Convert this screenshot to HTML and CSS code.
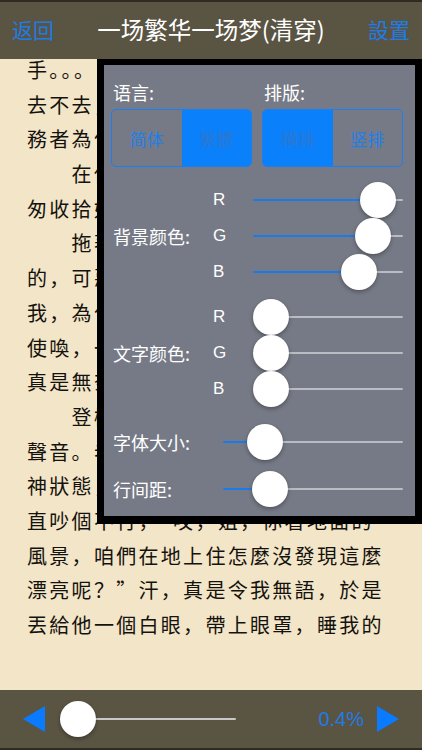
FILE: index.html
```html
<!DOCTYPE html>
<html lang="zh">
<head>
<meta charset="utf-8">
<title>一场繁华一场梦(清穿)</title>
<link rel="stylesheet" href="styles.css">
</head>
<body>
<div class="app">
  <header class="topbar">
    <span class="nav-btn">返回</span>
    <span class="title">一场繁华一场梦(清穿)</span>
    <span class="nav-btn">設置</span>
  </header>

  <main class="reader">
    <div class="text">
      <div class="line">手。。。“姐，你到底是去還是</div>
      <div class="line">去不去，給個話啊！”識時</div>
      <div class="line">務者為俊傑，我只好點頭。</div>
      <div class="line">　　在他的催促下，我匆</div>
      <div class="line">匆收拾好行李，跟著他出了</div>
      <div class="line">　　拖著沉重的行李箱，累</div>
      <div class="line">的，可惡的老弟居然不幫</div>
      <div class="line">我，為什麼我就要被他這麼</div>
      <div class="line">使喚，一點都不懂得尊重</div>
      <div class="line">真是無奈啊。</div>
      <div class="line">　　登機後，耳邊傳來他的</div>
      <div class="line">聲音。老弟一副興奮的精</div>
      <div class="line">神狀態，對著窗外的雲層</div>
      <div class="line">直吵個不行，“哎，姐，你看地面的</div>
      <div class="line">風景，咱們在地上住怎麼沒發現這麼</div>
      <div class="line">漂亮呢？”汗，真是令我無語，於是</div>
      <div class="line">丟給他一個白眼，帶上眼罩，睡我的</div>
    </div>

    <section class="panel">
      <div class="seg-labels">
        <span class="label">语言:</span>
        <span class="label">排版:</span>
      </div>
      <div class="seg-row">
        <div class="segmented">
          <span class="seg">简体</span>
          <span class="seg on">繁體</span>
        </div>
        <div class="segmented">
          <span class="seg on">横排</span>
          <span class="seg">竖排</span>
        </div>
      </div>

      <div class="rgb-group first">
        <span class="group-name">背景颜色:</span>
        <span class="ch">R</span>
        <div class="slider" style="--p:0.94"><div class="track"></div><div class="thumb"></div></div>
        <span class="ch">G</span>
        <div class="slider" style="--p:0.895"><div class="track"></div><div class="thumb"></div></div>
        <span class="ch">B</span>
        <div class="slider" style="--p:0.77"><div class="track"></div><div class="thumb"></div></div>
      </div>

      <div class="rgb-group second">
        <span class="group-name">文字颜色:</span>
        <span class="ch">R</span>
        <div class="slider" style="--p:0"><div class="track"></div><div class="thumb"></div></div>
        <span class="ch">G</span>
        <div class="slider" style="--p:0"><div class="track"></div><div class="thumb"></div></div>
        <span class="ch">B</span>
        <div class="slider" style="--p:0"><div class="track"></div><div class="thumb"></div></div>
      </div>

      <div class="single-row font-row">
        <span class="row-name">字体大小:</span>
        <div class="slider" style="--p:0.17"><div class="track"></div><div class="thumb"></div></div>
      </div>

      <div class="single-row spacing-row">
        <span class="row-name">行间距:</span>
        <div class="slider" style="--p:0.2"><div class="track"></div><div class="thumb"></div></div>
      </div>
    </section>
  </main>

  <footer class="bottombar">
    <svg class="tri" width="22" height="26" viewBox="0 0 22 26"><polygon points="22,0 22,26 0,13" fill="#0a7aff"/></svg>
    <div class="slider page-slider" style="--p:0"><div class="track"></div><div class="thumb"></div></div>
    <span class="percent">0.4%</span>
    <svg class="tri" width="22" height="26" viewBox="0 0 22 26"><polygon points="0,0 0,26 22,13" fill="#0a7aff"/></svg>
  </footer>
</div>
</body>
</html>
```

FILE: styles.css
```css
* { box-sizing: border-box; }

html, body {
  margin: 0;
  padding: 0;
  width: 422px;
  height: 750px;
  overflow: hidden;
  background: #f3e5c7;
  font-family: "Noto Sans CJK SC", "Noto Sans", sans-serif;
}

.app {
  width: 422px;
  height: 750px;
  display: flex;
  flex-direction: column;
}

/* top bar */
.topbar {
  height: 59px;
  flex: none;
  background: #5a5443;
  border-top: 2px solid #2f2b23;
  display: grid;
  grid-template-columns: auto 1fr auto;
  align-items: center;
  padding: 0 12px 4px;
}

.nav-btn {
  color: #1f7be6;
  font-size: 21px;
  line-height: 26px;
}

.title {
  color: #ffffff;
  font-size: 23.5px;
  line-height: 28px;
  text-align: center;
  white-space: nowrap;
}

/* reading area */
.reader {
  flex: 1;
  position: relative;
  overflow: hidden;
  background: #f3e5c7;
  padding-left: 27px;
}

.text {
  margin-top: -6px;
  font-family: "Noto Sans CJK SC", "Noto Sans CJK TC", sans-serif;
  font-size: 20px;
  letter-spacing: 2.3px;
  line-height: 34.7px;
  color: #14120e;
}

.line {
  white-space: pre;
  height: 34.7px;
}

/* settings panel */
.panel {
  position: absolute;
  top: 0;
  left: 97px;
  width: 325px;
  background: #767a86;
  border-style: solid;
  border-color: #000;
  border-width: 6px 7px 8px 7px;
  padding: 16px 12px 9px 7px;
  color: #ffffff;
}

.seg-labels,
.seg-row {
  display: grid;
  grid-template-columns: 141px 141px;
  column-gap: 10px;
}

.label {
  font-size: 18px;
  line-height: 22px;
  padding-left: 2px;
}

.seg-row {
  margin-top: 6px;
  height: 58px;
}

.segmented {
  display: flex;
  border: 1px solid #1a7ff0;
  border-radius: 5px;
  overflow: hidden;
}

.seg {
  flex: 1;
  display: flex;
  align-items: center;
  justify-content: center;
  font-size: 17px;
  color: #1f7fe8;
}

.seg.on {
  background: #0a80fb;
  color: #2a78d2;
}

.rgb-group {
  display: grid;
  grid-template-columns: 100px 40px 150px;
  grid-template-rows: 36px 36px 36px;
  padding-left: 2px;
  align-items: center;
}

.rgb-group.first { margin-top: 15px; }
.rgb-group.second { margin-top: 9px; }

.group-name {
  grid-column: 1;
  grid-row: 1 / 4;
  font-size: 18px;
  line-height: 22px;
}

.ch {
  grid-column: 2;
  font-family: "Liberation Sans", "Noto Sans", sans-serif;
  font-size: 17px;
  line-height: 20px;
}

.rgb-group .slider { grid-column: 3; }

.single-row {
  display: grid;
  grid-template-columns: 110px 180px;
  height: 36px;
  padding-left: 2px;
  align-items: center;
}

.font-row { margin-top: 17px; }
.spacing-row { margin-top: 11px; }

.row-name {
  font-size: 18px;
  line-height: 22px;
}

/* slider */
.slider {
  position: relative;
  height: 36px;
  padding-top: 17px;
}

.track {
  height: 2px;
  border-radius: 1px;
  background: linear-gradient(to right,
    #1a7aea 0,
    #1a7aea calc(18px + var(--p) * (100% - 36px)),
    #b9bcc2 calc(18px + var(--p) * (100% - 36px)),
    #b9bcc2 100%);
}

.thumb {
  position: absolute;
  top: 0;
  left: calc(var(--p) * (100% - 36px));
  width: 36px;
  height: 36px;
  border-radius: 50%;
  background: #ffffff;
  box-shadow: 0 2px 4px rgba(0, 0, 0, 0.3), 0 0 1px rgba(0, 0, 0, 0.2);
}

/* bottom bar */
.bottombar {
  height: 60px;
  flex: none;
  background: #5a5443;
  border-bottom: 2px solid #2f2b23;
  display: flex;
  align-items: center;
  padding: 0 23px;
}

.tri { flex: none; display: block; }

.page-slider {
  width: 176px;
  margin-left: 15px;
}

.page-slider .track {
  background: #c9c9c9;
}

.percent {
  margin-left: auto;
  margin-right: 13px;
  color: #1f7be6;
  font-family: "Liberation Sans", "Noto Sans", sans-serif;
  font-size: 20px;
  line-height: 24px;
}
```
